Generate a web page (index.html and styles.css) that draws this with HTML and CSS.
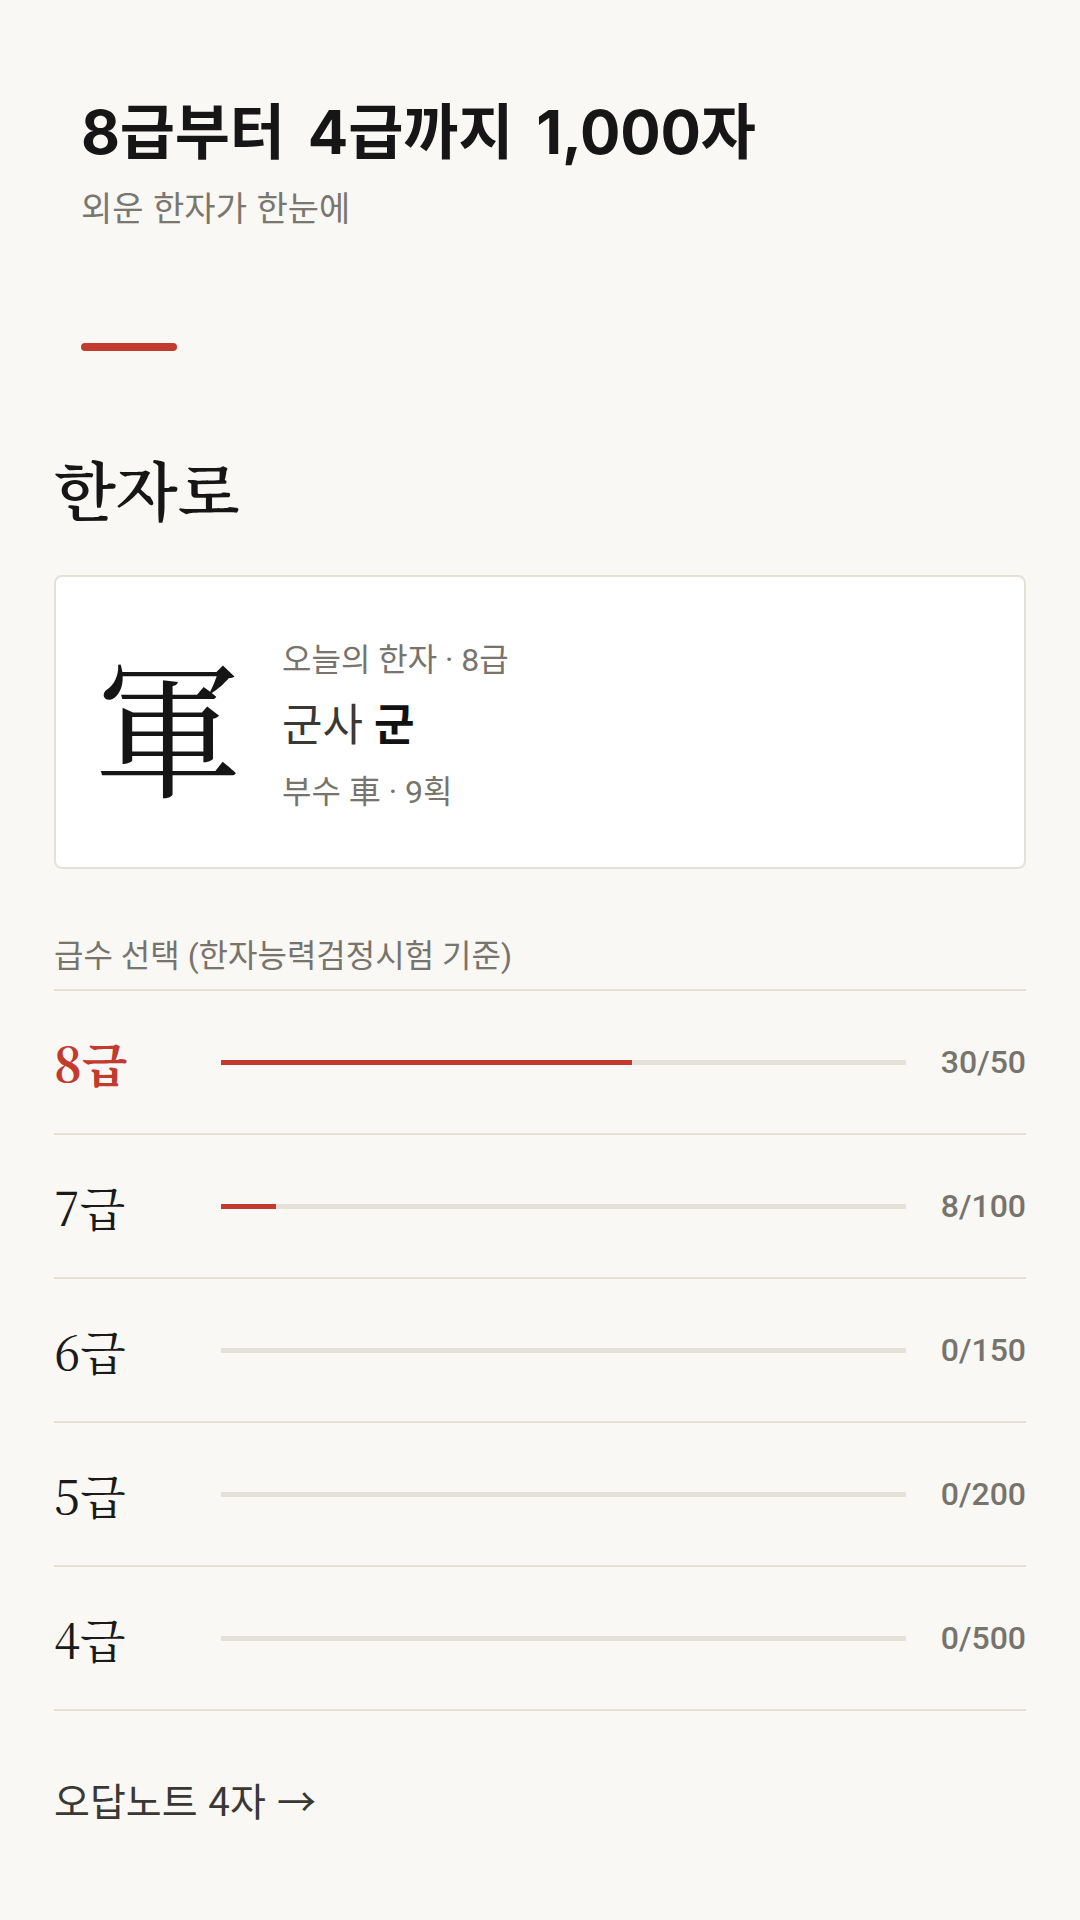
FILE: index.html
```html
<!DOCTYPE html>
<html lang="ko">
<head>
<meta charset="utf-8">
<title>한자로</title>
<link rel="stylesheet" href="styles.css">
</head>
<body>
<main class="page">
  <header class="hero">
    <h1 class="hero-title">8급부터 4급까지 1,000자</h1>
    <p class="hero-sub">외운 한자가 한눈에</p>
    <div class="accent"></div>
  </header>

  <h2 class="brand">한자로</h2>

  <section class="card">
    <div class="card-char">軍</div>
    <div class="card-info">
      <div class="card-meta">오늘의 한자 · 8급</div>
      <div class="card-reading">군사 <b>군</b></div>
      <div class="card-meta">부수 車 · 9획</div>
    </div>
  </section>

  <div class="list-label">급수 선택 (한자능력검정시험 기준)</div>
  <ul class="grades">
    <li class="grade active">
      <span class="grade-name">8급</span>
      <span class="track"><span class="fill" style="width:60%"></span></span>
      <span class="count">30/50</span>
    </li>
    <li class="grade">
      <span class="grade-name">7급</span>
      <span class="track"><span class="fill" style="width:8%"></span></span>
      <span class="count">8/100</span>
    </li>
    <li class="grade">
      <span class="grade-name">6급</span>
      <span class="track"><span class="fill" style="width:0%"></span></span>
      <span class="count">0/150</span>
    </li>
    <li class="grade">
      <span class="grade-name">5급</span>
      <span class="track"><span class="fill" style="width:0%"></span></span>
      <span class="count">0/200</span>
    </li>
    <li class="grade">
      <span class="grade-name">4급</span>
      <span class="track"><span class="fill" style="width:0%"></span></span>
      <span class="count">0/500</span>
    </li>
  </ul>

  <a class="wrong-note" href="#">오답노트 4자 →</a>
</main>
</body>
</html>
```

FILE: styles.css
```css
* { box-sizing: border-box; }

html, body {
  margin: 0;
  padding: 0;
  background: #f9f8f4;
}

body {
  font-family: "Roboto", "Noto Sans CJK KR", sans-serif;
  color: #1a1a1a;
}

.page {
  padding: 0 54px;
  min-height: 1920px;
}

.hero {
  padding: 92px 27px 0;
}

.hero-title {
  margin: 0;
  font-family: "Inter", "Noto Sans CJK KR", sans-serif;
  font-weight: 700;
  font-size: 60px;
  line-height: 80px;
  letter-spacing: -0.2px;
  word-spacing: 9px;
  color: #161616;
}

.hero-sub {
  margin: 13px 0 0;
  font-family: "Noto Sans CJK KR", sans-serif;
  font-size: 34px;
  line-height: 44px;
  color: #7a7670;
}

.accent {
  margin-top: 114px;
  width: 96px;
  height: 8px;
  border-radius: 4px;
  background: #c23b2e;
}

.brand {
  margin: 92px 0 0;
  font-family: "Noto Serif CJK KR", "Noto Serif KR", serif;
  font-weight: 600;
  font-size: 64px;
  line-height: 88px;
  color: #161616;
}

.card {
  margin-top: 44px;
  height: 294px;
  background: #fff;
  border: 2px solid #e5e1d8;
  border-radius: 8px;
  display: flex;
  align-items: center;
  padding: 0 38px;
  gap: 40px;
}

.card-char {
  font-family: "Noto Serif CJK KR", "Noto Serif CJK SC", serif;
  font-size: 148px;
  line-height: 1;
  color: #151515;
}

.card-info {
  display: flex;
  flex-direction: column;
  gap: 18px;
  padding-top: 8px;
}

.card-meta {
  font-size: 32px;
  line-height: 40px;
  color: #77736d;
}

.card-reading {
  font-size: 44px;
  line-height: 56px;
  color: #3a3835;
}

.card-reading b {
  font-weight: 700;
  color: #111;
}

.list-label {
  margin-top: 66px;
  padding-bottom: 12px;
  border-bottom: 2px solid #e5e1d8;
  font-size: 32px;
  line-height: 42px;
  color: #77736d;
}

.grades {
  list-style: none;
  margin: 0;
  padding: 0;
}

.grade {
  height: 144px;
  border-bottom: 2px solid #e5e1d8;
  display: grid;
  grid-template-columns: 167px 1fr 100px;
  column-gap: 20px;
  align-items: center;
}

.grade-name {
  font-family: "Noto Serif CJK KR", "Noto Serif KR", serif;
  font-size: 47px;
  line-height: 60px;
  color: #1a1a1a;
}

.grade.active .grade-name {
  color: #c23b2e;
  font-weight: 700;
}

.track {
  grid-column: 2;
  margin-left: -20px;
  height: 5px;
  background: #e5e1d8;
  display: block;
}

.fill {
  display: block;
  height: 100%;
  background: #c23b2e;
}

.count {
  text-align: right;
  font-size: 32px;
  font-weight: 500;
  color: #77736d;
}

.wrong-note {
  display: inline-block;
  margin-top: 62px;
  font-family: "Noto Sans CJK KR", sans-serif;
  font-size: 39px;
  line-height: 52px;
  color: #3a3835;
  text-decoration: none;
}
```
